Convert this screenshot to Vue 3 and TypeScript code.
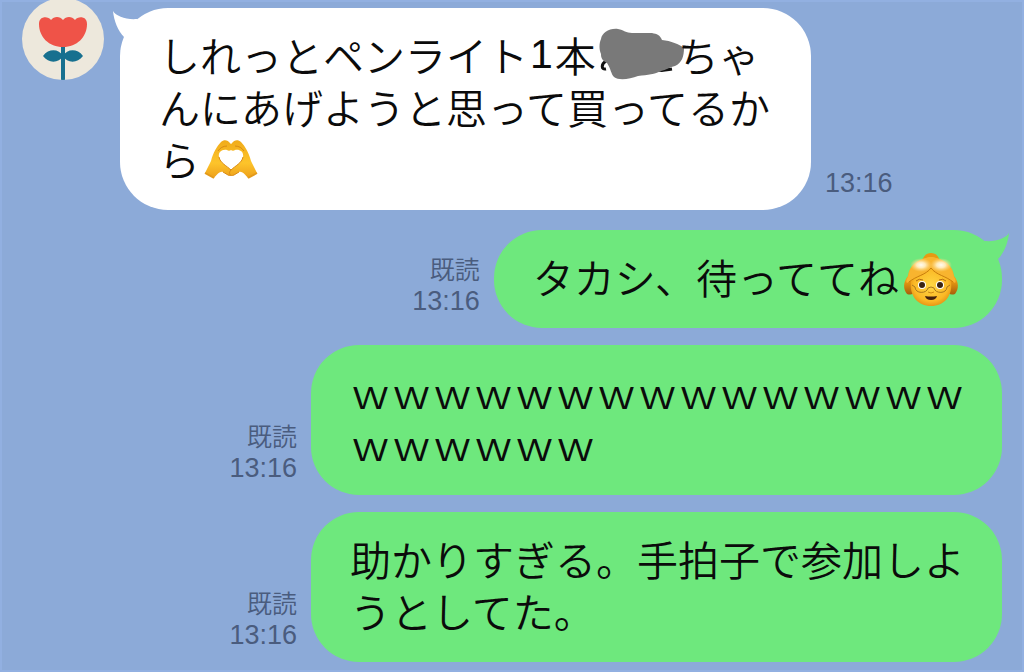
<script setup lang="ts">
type Emoji = 'heart-hands' | 'grandma'
type Part =
  | { kind: 'text'; value: string }
  | { kind: 'digit'; value: string }
  | { kind: 'scribble' }
  | { kind: 'emoji'; value: Emoji }

interface Message {
  id: number
  mine: boolean
  tail: boolean
  time: string
  parts: Part[]
}

const messages: Message[] = [
  {
    id: 1,
    mine: false,
    tail: true,
    time: '13:16',
    parts: [
      { kind: 'text', value: 'しれっとペンライト' },
      { kind: 'digit', value: '1' },
      { kind: 'text', value: '本' },
      { kind: 'scribble' },
      { kind: 'text', value: 'ちゃんにあげようと思って買ってるから' },
      { kind: 'emoji', value: 'heart-hands' },
    ],
  },
  {
    id: 2,
    mine: true,
    tail: true,
    time: '13:16',
    parts: [
      { kind: 'text', value: 'タカシ、待っててね' },
      { kind: 'emoji', value: 'grandma' },
    ],
  },
  {
    id: 3,
    mine: true,
    tail: false,
    time: '13:16',
    parts: [{ kind: 'text', value: 'ｗ'.repeat(21) }],
  },
  {
    id: 4,
    mine: true,
    tail: false,
    time: '13:16',
    parts: [{ kind: 'text', value: '助かりすぎる。手拍子で参加しようとしてた。' }],
  },
]

const handSides = ['', 'translate(56 0) scale(-1 1)']
</script>

<template>
  <main class="chat">
    <article v-for="m in messages" :key="m.id" class="row" :class="{ mine: m.mine }">
      <svg v-if="!m.mine" class="avatar" viewBox="0 0 82 82" aria-hidden="true">
        <defs>
          <clipPath id="avatar-clip"><circle cx="41" cy="41" r="41" /></clipPath>
        </defs>
        <g clip-path="url(#avatar-clip)">
          <rect width="82" height="82" fill="#ede8dc" />
          <path d="M39 48h4v34h-4z" fill="#17708f" />
          <path d="M41 58C37 51 27 50 21 58C27 66 37 65 41 58C45 65 55 66 61 58C55 50 45 51 41 58Z" fill="#17708f" />
          <path
            d="M17 26C17 18 26 18 29 22C32 18 38 18 41 22C44 18 50 18 53 22C56 18 65 18 65 26C65 39 55 49 41 49C27 49 17 39 17 26Z"
            fill="#ef5348"
          />
        </g>
      </svg>

      <div class="bubble">
        <svg v-if="m.tail" class="tail" viewBox="0 0 34 34" aria-hidden="true">
          <path d="M0 0C3 5 13 9 24 8L34 20L20 34L11 26C5 20 1 10 0 0Z" fill="currentColor" />
        </svg>
        <p class="text">
          <template v-for="(p, i) in m.parts" :key="i">
            <template v-if="p.kind === 'text'">{{ p.value }}</template>
            <span v-else-if="p.kind === 'digit'" class="digit">{{ p.value }}</span>
            <svg v-else-if="p.kind === 'scribble'" class="scribble" viewBox="0 0 82 52" aria-hidden="true">
              <path d="M10 33C5 36 5 42 10 41" fill="none" stroke="#111" stroke-width="3" />
              <path d="M60 41C64 44 70 42 76 41" fill="none" stroke="#111" stroke-width="3" />
              <path
                d="M5 11C6 5 13 0 22 1C28 2 30 5 36 5L56 5C61 6 64 7 66 12C75 13 83 16 88 20C88 28 86 35 79 38C74 39 70 42 65 43C59 46 52 47 42 48C34 51 23 53 18 49C15 46 15 41 11 35C6 32 5 30 5 26C3 22 3 15 5 11Z"
                fill="#797979"
              />
            </svg>
            <svg
              v-else-if="p.value === 'heart-hands'"
              class="emoji"
              viewBox="-3 -3 67 52"
              role="img"
              aria-label="ハートの手"
            >
              <defs>
                <linearGradient id="hand" x1="0" y1="0" x2="0" y2="1">
                  <stop offset="0" stop-color="#f0ab1a" />
                  <stop offset=".6" stop-color="#fdc42b" />
                  <stop offset="1" stop-color="#eda01b" />
                </linearGradient>
              </defs>
              <g v-for="side in handSides" :key="side" :transform="side">
                <path
                  d="M2 38L8 26C10 18 14 11 18 7C21 4 25 5 27 8C29 10 30 13 28 15C27 16 25 16 24 15C19 14 15 17 16 22C17 28 24 31 28 35C31 38 29 42 25 40L20 37C16 36 13 41 11 43Z"
                  fill="url(#hand)"
                />
                <path
                  d="M16 22C17 28 24 31 28 35C31 38 29 42 25 40L20 37M15 16C17 13 20 11 24 11"
                  fill="none"
                  stroke="#d98b13"
                  stroke-width="1"
                />
                <path d="M2 38L11 43" stroke="#e39a1a" stroke-width="2" />
              </g>
            </svg>
            <svg v-else class="emoji" viewBox="-3 -3 67 52" role="img" aria-label="おばあさん">
              <defs>
                <radialGradient id="face" cx=".5" cy=".45" r=".6">
                  <stop offset="0" stop-color="#ffd643" />
                  <stop offset=".7" stop-color="#fbb926" />
                  <stop offset="1" stop-color="#e08a0f" />
                </radialGradient>
                <linearGradient id="hair" x1="0" y1="0" x2="0" y2="1">
                  <stop offset="0" stop-color="#ffc23a" />
                  <stop offset=".6" stop-color="#f0a014" />
                  <stop offset="1" stop-color="#a85e0a" />
                </linearGradient>
                <radialGradient id="shine">
                  <stop offset="0" stop-color="#fffbf0" />
                  <stop offset=".4" stop-color="#ffeab8" />
                  <stop offset="1" stop-color="#ffd474" stop-opacity="0" />
                </radialGradient>
              </defs>
              <path d="M20 8C22 2 25 0 29 0C33 0 36 2 38 8Z" fill="#e79a12" />
              <path
                d="M29 4C43 6 51 13 52 23C57 29 57 36 53 41C50 42 47 42 44 38L14 38C11 42 8 42 5 41C1 36 1 29 6 23C7 13 15 6 29 4Z"
                fill="url(#hair)"
              />
              <path d="M29 15C37 18 45 21 49 28C51 43 42 53 29 53C16 53 7 43 9 28C13 21 21 18 29 15Z" fill="url(#face)" />
              <path d="M29 4C18 5 8 12 6 24C4 27 4 29 5 30C12 24 24 23 29 15C34 23 46 24 53 30C54 29 54 27 52 24C50 12 40 5 29 4Z" fill="#f8b42f" />
              <path d="M7 29C14 23 24 22 29 15C34 22 44 23 51 29" fill="none" stroke="#c97f0c" stroke-width="1" />
              <ellipse cx="19" cy="12" rx="11" ry="7" fill="url(#shine)" />
              <ellipse cx="39" cy="12" rx="11" ry="7" fill="url(#shine)" />
              <path d="M14 28Q17 25 21 27M37 27Q41 25 44 28" fill="none" stroke="#b66d12" stroke-width="1" />
              <circle cx="20" cy="32" r="4" fill="#fff" />
              <circle cx="38" cy="32" r="4" fill="#fff" />
              <circle cx="20" cy="32" r="3" fill="#3b2413" />
              <circle cx="38" cy="32" r="3" fill="#3b2413" />
              <path
                d="M13 34C13 41 25 41 26 35M32 35C33 41 45 41 45 34M26 35Q29 33 32 35M10 32L13 34M48 32L45 34"
                fill="none"
                stroke="#a9771e"
                stroke-width="1"
              />
              <path d="M26 39Q29 41 32 39" fill="none" stroke="#d08a14" stroke-width="1" />
              <path d="M23 43Q29 44 35 43Q34 47 29 47Q24 47 23 43Z" fill="#43210d" />
            </svg>
          </template>
        </p>
      </div>

      <div class="meta">
        <span v-if="m.mine" class="read">既読</span>
        <time class="time">{{ m.time }}</time>
      </div>
    </article>
  </main>
</template>

<style>
body {
  margin: 0;
  background: #8caad8;
}
</style>

<style scoped>
.chat {
  box-sizing: border-box;
  min-height: 100vh;
  display: flex;
  flex-direction: column;
  gap: 17px;
  padding: 8px 22px 10px;
  overflow: hidden;
  background: #8caad8;
  box-shadow: inset 0 0 0 2px #92b0e1;
  font-family: 'Noto Sans CJK JP', sans-serif;
}

.row {
  display: flex;
  align-items: flex-end;
}

.row:first-child {
  margin-bottom: 3px;
}

.row.mine {
  flex-direction: row-reverse;
}

.avatar {
  flex: none;
  align-self: flex-start;
  width: 82px;
  height: 82px;
  margin: -10px 16px 0 0;
}

.bubble {
  position: relative;
  box-sizing: border-box;
  max-width: 691px;
  padding: 20px 36px 26px 39px;
  border-radius: 48px;
  background: #fff;
  color: #fff;
}

.mine .bubble {
  background: #6ee87d;
  color: #6ee87d;
}

.tail {
  position: absolute;
  top: 3px;
  left: -7px;
  width: 34px;
  height: 34px;
}

.mine .tail {
  left: auto;
  right: -7px;
  transform: scaleX(-1);
}

.text {
  position: relative;
  margin: 0;
  color: #0b0b0b;
  font-size: 41px;
  font-weight: 350;
  line-height: 52px;
}

.digit {
  display: inline-block;
  height: 52px;
  margin: 0 2px;
  font-family: 'Liberation Sans', sans-serif;
  vertical-align: top;
}

.scribble {
  width: 82px;
  height: 52px;
  overflow: visible;
  vertical-align: top;
}

.emoji {
  width: 67px;
  height: 52px;
  overflow: visible;
  vertical-align: top;
}

.meta {
  display: flex;
  flex-direction: column;
  margin: 0 14px 10px;
  color: #4a5c7e;
  line-height: 33px;
}

.mine .meta {
  align-items: flex-end;
}

.read {
  font-size: 25px;
  font-weight: 350;
}

.time {
  font-family: 'Liberation Sans', sans-serif;
  font-size: 27px;
}
</style>
